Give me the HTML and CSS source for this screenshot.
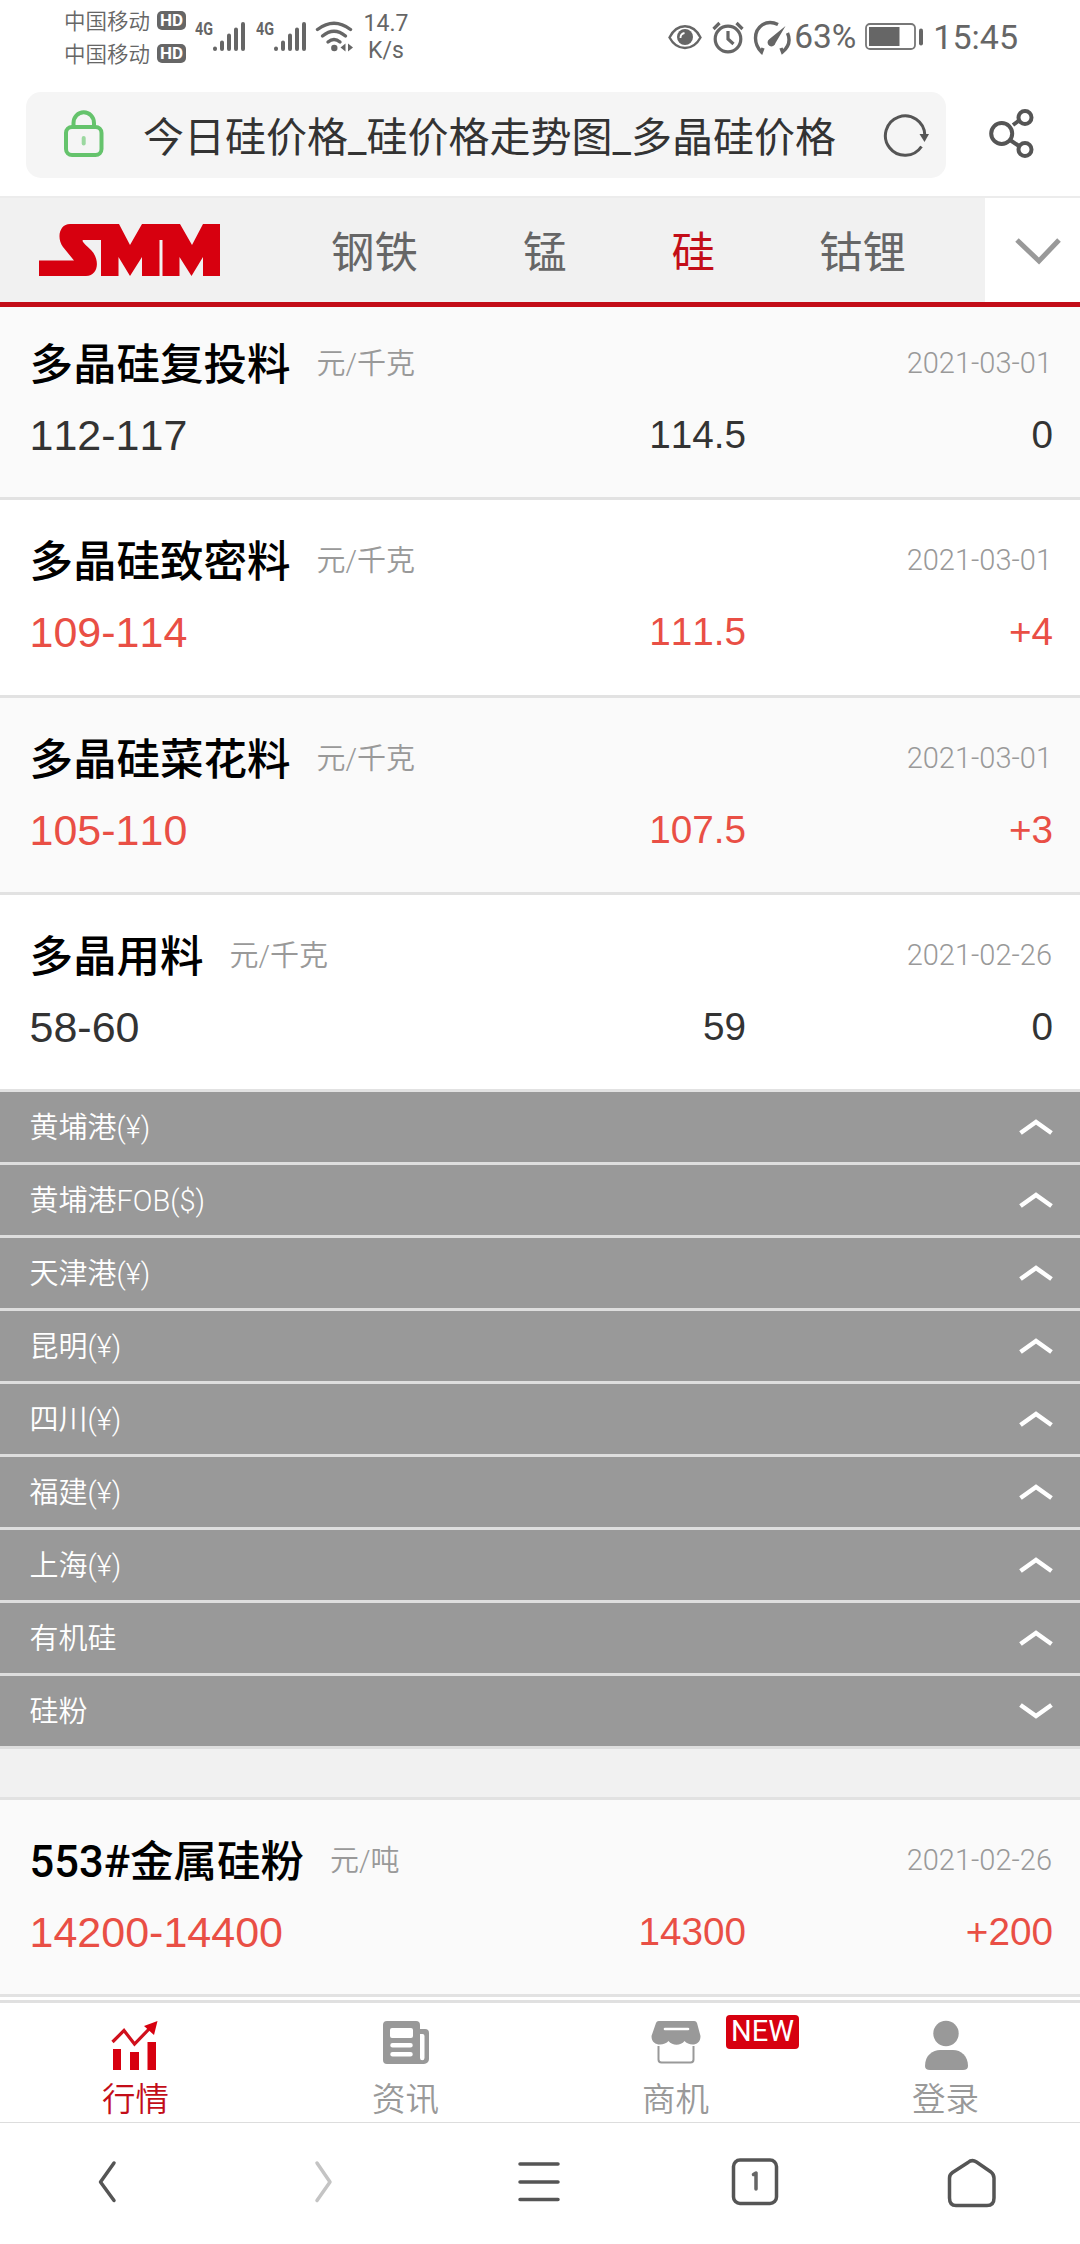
FILE: index.html
```
<!DOCTYPE html>
<html lang="zh-CN">
<head>
<meta charset="utf-8">
<title>今日硅价格_硅价格走势图_多晶硅价格</title>
<link rel="stylesheet" href="styles.css">
</head>
<body>
<header class="status">
  <div class="carriers">
    <div class="carrier"><span>中国移动</span><b class="hd">HD</b></div>
    <div class="carrier"><span>中国移动</span><b class="hd">HD</b></div>
  </div>
  <svg class="signal" width="52" height="36" viewBox="0 0 52 36"><text class="net" x="0" y="15.500" textLength="18" lengthAdjust="spacingAndGlyphs">4G</text><g stroke="#666" stroke-width="4" stroke-linecap="round"><path d="M20 29.500v.5M27 23.500v6.500M34 16.500v13.500M41 10.500v19.500M48 5v25"/></g></svg>
  <svg class="signal" width="52" height="36" viewBox="0 0 52 36"><text class="net" x="0" y="15.500" textLength="18" lengthAdjust="spacingAndGlyphs">4G</text><g stroke="#666" stroke-width="4" stroke-linecap="round"><path d="M20 29.500v.5M27 23.500v6.500M34 16.500v13.500M41 10.500v19.500M48 5v25"/></g></svg>
  <svg class="wifi" width="40" height="36" viewBox="0 0 40 36"><g fill="none" stroke="#666" stroke-width="3.400" stroke-linecap="round"><path d="M2.500 11.500Q19 -1 35.500 11.500"/><path d="M7.500 18Q19 8.500 30.500 18"/><path d="M13 24Q19 19 25 24"/></g><circle cx="19.300" cy="30" r="3.200" fill="#666"/><path d="M25.500 29.500l5-4v8zM38 29.500l-5-4v8z" fill="#666"/></svg>
  <div class="speed"><span>14.7</span><span>K/s</span></div>
  <div class="status-right">
    <svg width="34" height="36" viewBox="0 0 34 36"><path d="M1.500 18.500C9 3.500 25 3.500 32.500 18.500C25 32.500 9 32.500 1.500 18.500Z" fill="none" stroke="#666" stroke-width="2.400"/><circle cx="17" cy="18" r="8" fill="#666"/><path d="M12.500 19a5 5 0 0 1 4-5" stroke="#fff" stroke-width="1.800" fill="none"/></svg>
    <svg class="alarm" width="32" height="36" viewBox="0 0 32 36"><g fill="none" stroke="#666" stroke-width="3.200"><circle cx="16" cy="20" r="12.800"/><path d="M16 12v8l5.500 5M1.500 10l6-6M30.500 10l-6-6"/></g></svg>
    <svg class="gauge" width="38" height="36" viewBox="0 0 38 36"><g fill="none" stroke="#666" stroke-width="3.400"><path d="M25 5.500C13-.5 2.500 8 2.500 19C2.500 25 4.500 29 8.500 33L10 29"/><path d="M34.500 14C38 22 35.500 28 29.500 33L28 29"/></g><path d="M32.500 7L22.500 24a4 4 0 1 1-6-4Z" fill="#666"/></svg>
    <span class="pct">63%</span>
    <svg class="battery" width="60" height="30" viewBox="0 0 60 30"><rect x="1" y="2" width="49" height="25" rx="4" fill="none" stroke="#777" stroke-width="1.800"/><rect x="4" y="5" width="30.500" height="19" fill="#666"/><path d="M56 8.500v13" stroke="#666" stroke-width="4" stroke-linecap="round"/></svg>
    <span class="clock">15:45</span>
  </div>
</header>

<div class="urlbar">
  <div class="address">
    <svg class="lock" width="42" height="50" viewBox="0 0 42 50"><g fill="none" stroke="#65c36c" stroke-width="4"><rect x="3" y="18" width="35.500" height="28" rx="6"/><path d="M10.500 17v-3a10 10.500 0 0 1 20.500 0v3"/></g><path d="M20.700 29v5.500" stroke="#9bd8a0" stroke-width="4" stroke-linecap="round"/></svg>
    <span class="url">今日硅价格_硅价格走势图_多晶硅价格</span>
    <svg class="reload" width="46" height="46" viewBox="0 0 46 46"><path d="M38.500 34.500A19.700 19.700 0 1 1 41.800 23" fill="none" stroke="#555" stroke-width="3"/><path d="M36.500 22h9.500l-4.500 8z" fill="#555"/></svg>
  </div>
  <svg class="share" width="46" height="52" viewBox="0 0 46 52"><g fill="none" stroke="#555" stroke-width="4"><circle cx="12.700" cy="25.500" r="10.500"/><circle cx="36" cy="9.500" r="6.500"/><circle cx="36" cy="41.500" r="6.500"/><path d="M24 17l6-4.500M21 32l9 6"/></g></svg>
</div>

<nav class="topnav">
  <svg class="logo" width="182" height="52" viewBox="0 0 182 52"><path fill="#d7000f" fill-rule="evenodd" d="M31 0H80L91 21L103 0H141L153 21L164 0H181V52H164V33L152.500 52L140.500 33V52H123.500V16H120.500V52H103V33L91 52L79.500 33V52H62V16H44C42 17 47 21 52 26C61 35 60 52 47 52H0V36.500H35L24 23C17 13 21 0 31 0Z"/></svg>
  <span class="tab t1">钢铁</span><span class="tab t2">锰</span><span class="tab t3 active">硅</span><span class="tab t4">钴锂</span>
  <div class="more"><svg width="48" height="30" viewBox="0 0 48 30"><path d="M3 3L25 24L45 3" fill="none" stroke="#999" stroke-width="5"/></svg></div>
</nav>

<main class="content">
  <section class="item alt first"><div class="head"><h2>多晶硅复投料</h2><span class="unit">元/千克</span><time>2021-03-01</time></div><div class="nums"><span class="range">112-117</span><span class="avg">114.5</span><span class="diff">0</span></div></section>
  <section class="item up"><div class="head"><h2>多晶硅致密料</h2><span class="unit">元/千克</span><time>2021-03-01</time></div><div class="nums"><span class="range">109-114</span><span class="avg">111.5</span><span class="diff">+4</span></div></section>
  <section class="item alt up"><div class="head"><h2>多晶硅菜花料</h2><span class="unit">元/千克</span><time>2021-03-01</time></div><div class="nums"><span class="range">105-110</span><span class="avg">107.5</span><span class="diff">+3</span></div></section>
  <section class="item"><div class="head"><h2>多晶用料</h2><span class="unit">元/千克</span><time>2021-02-26</time></div><div class="nums"><span class="range">58-60</span><span class="avg">59</span><span class="diff">0</span></div></section>

  <div class="group"><span>黄埔港(¥)</span><svg class="chev" viewBox="0 0 34 18"><path d="M1.500 15L17 4L32.500 15"/></svg></div>
  <div class="group"><span>黄埔港FOB($)</span><svg class="chev" viewBox="0 0 34 18"><path d="M1.500 15L17 4L32.500 15"/></svg></div>
  <div class="group"><span>天津港(¥)</span><svg class="chev" viewBox="0 0 34 18"><path d="M1.500 15L17 4L32.500 15"/></svg></div>
  <div class="group"><span>昆明(¥)</span><svg class="chev" viewBox="0 0 34 18"><path d="M1.500 15L17 4L32.500 15"/></svg></div>
  <div class="group"><span>四川(¥)</span><svg class="chev" viewBox="0 0 34 18"><path d="M1.500 15L17 4L32.500 15"/></svg></div>
  <div class="group"><span>福建(¥)</span><svg class="chev" viewBox="0 0 34 18"><path d="M1.500 15L17 4L32.500 15"/></svg></div>
  <div class="group"><span>上海(¥)</span><svg class="chev" viewBox="0 0 34 18"><path d="M1.500 15L17 4L32.500 15"/></svg></div>
  <div class="group"><span>有机硅</span><svg class="chev" viewBox="0 0 34 18"><path d="M1.500 15L17 4L32.500 15"/></svg></div>
  <div class="group"><span>硅粉</span><svg class="chev" viewBox="0 0 34 18"><path d="M1.500 3L17 14L32.500 3"/></svg></div>
  <div class="spacer"></div>

  <section class="item alt up"><div class="head"><h2>553#金属硅粉</h2><span class="unit">元/吨</span><time>2021-02-26</time></div><div class="nums"><span class="range">14200-14400</span><span class="avg">14300</span><span class="diff">+200</span></div></section>
</main>

<nav class="appbar">
  <a class="app active"><svg width="48" height="52" viewBox="0 0 48 52"><path d="M2 29h8v21H2zM19 32h9v18h-9zM36.500 22H45v28h-8.500z" fill="#d7000f"/><path d="M1.500 22L13 10.500L23.500 24L41 6" fill="none" stroke="#d0101c" stroke-width="3.200"/><path d="M46.500 1L43 15L33 6z" fill="#d7000f"/></svg><span>行情</span></a>
  <a class="app"><svg class="nudge" width="48" height="52" viewBox="0 0 48 52"><path fill="#999" fill-rule="evenodd" d="M5 1H34a4 4 0 0 1 4 4V9h5a4 4 0 0 1 4 4V39a5 5 0 0 1-5 5H5a4 4 0 0 1-4-4V5a4 4 0 0 1 4-4ZM10 8a2 2 0 0 0-2 2v6a2 2 0 0 0 2 2H29a2 2 0 0 0 2-2v-6a2 2 0 0 0-2-2ZM10.500 23a2.200 2.200 0 0 0 0 4.500h18a2.200 2.200 0 0 0 0-4.500ZM10.500 32a2.200 2.200 0 0 0 0 4.500h18a2.200 2.200 0 0 0 0-4.500ZM38 14V38a2.200 2.200 0 0 0 4.500 0V16a2 2 0 0 0-2-2Z"/></svg><span>资讯</span></a>
  <a class="app"><svg class="nudge" width="50" height="52" viewBox="0 0 50 52"><path d="M8 1H43a3 3 0 0 1 3 2L49.500 16c0 11-12 10-16 5c-4 5-12 5-16 0c-4 5-17 6-17-5L5 3a3 3 0 0 1 3-2Z" fill="#999"/><path d="M14 9h23" stroke="#fff" stroke-width="2.600" stroke-linecap="round"/><path d="M7.500 26v13.500a3 3 0 0 0 3 3h29a3 3 0 0 0 3-3V26" fill="none" stroke="#999" stroke-width="2"/></svg><span>商机</span><b class="new">NEW</b></a>
  <a class="app"><svg class="nudge" width="48" height="52" viewBox="0 0 48 52"><circle cx="24" cy="13.500" r="12.700" fill="#999"/><path d="M3 46C3 35 11 30 18 30H31C39 30 46 36 46 46Q46 50 41 50H8Q3 50 3 46Z" fill="#999"/></svg><span>登录</span></a>
</nav>

<nav class="browserbar">
  <span><svg width="52" height="52" viewBox="0 0 52 52"><path d="M32 7L18.500 26L32 44.500" stroke="#555"/></svg></span>
  <span><svg width="52" height="52" viewBox="0 0 52 52"><path d="M19 7L32 26L19 44.500" stroke="#c4c4c4"/></svg></span>
  <span><svg width="52" height="52" viewBox="0 0 52 52"><path d="M6 8H44M6 26H44M6 43.500H44" stroke="#555"/></svg></span>
  <span><svg width="52" height="52" viewBox="0 0 52 52"><rect x="3.500" y="4" width="43" height="43.500" rx="6.500" stroke="#555"/><path d="M23.500 18.500L26 17V33" stroke="#666"/></svg></span>
  <span><svg width="52" height="52" viewBox="0 0 52 52"><path d="M22 6.500Q26 3 30.500 6L45 16Q48 18.500 48 22V42Q48 49.500 41 49.500H10Q3.500 49.500 3.500 42V22Q3.500 18.500 6.500 16.500Z" stroke="#555"/></svg></span>
</nav>
</body>
</html>
```
FILE: styles.css
```
* { box-sizing: border-box; }
html, body { margin: 0; }
body {
  width: 1080px;
  height: 2244px;
  overflow: hidden;
  display: flex;
  flex-direction: column;
  background: #fff;
  font-family: Roboto, "Noto Sans CJK SC", sans-serif;
  color: #333;
}
svg { display: block; flex: none; }

/* system status bar */
.status {
  height: 92px;
  display: flex;
  align-items: flex-start;
  padding: 4px 62px 0 64px;
  color: #666;
}
.carriers { width: 122px; margin-top: -1px; display: flex; flex-direction: column; }
.carrier {
  height: 33px;
  display: flex;
  align-items: center;
  justify-content: space-between;
  font: 350 21.500px "Noto Sans CJK SC", sans-serif;
}
.carrier span { padding-bottom: 1px; }
.hd {
  width: 29px;
  height: 19px;
  margin-top: 1px;
  border-radius: 5px;
  background: #666;
  color: #fff;
  font: 700 17px/19px Roboto, sans-serif;
  text-align: center;
}
.signal { margin: 15px 0 0 9px; }
.net { font: 700 18px Roboto, sans-serif; fill: #666; }
.wifi { margin: 14px 0 0 7px; }
.speed {
  width: 50px;
  margin: 6px 0 0 6px;
  display: flex;
  flex-direction: column;
  align-items: center;
  font-size: 23px;
  line-height: 27px;
}
.status-right {
  margin-left: auto;
  display: flex;
  align-items: center;
  height: 65px;
  font-size: 34px;
}
.alarm { margin-left: 10px; }
.gauge { margin-left: 9px; }
.pct { margin-left: 3px; font-size: 33.500px; }
.battery { margin-left: 9px; }
.clock { margin-left: 8px; }

/* address bar */
.urlbar {
  height: 104px;
  display: flex;
  align-items: flex-start;
  padding-left: 26px;
}
.address {
  width: 920px;
  height: 86px;
  display: flex;
  align-items: center;
  padding-left: 37px;
  border-radius: 15px;
  background: #f5f5f5;
}
.url {
  flex: none;
  width: 740px;
  margin-left: 38px;
  padding-top: 5px;
  font-size: 41px;
  line-height: 60px;
  white-space: nowrap;
}
.lock { margin-top: -3px; }
.share { margin: 16px 0 0 43px; }

/* category tabs */
.topnav {
  height: 111px;
  display: flex;
  align-items: center;
  padding-left: 39px;
  border-top: 2px solid #ececec;
  border-bottom: 5px solid #c30d18;
  background: #f1f1f1;
}
.tab { padding-top: 8px; font-size: 43.500px; line-height: 60px; color: #666; }
.tab.active { color: #c30d18; }
.t1 { margin-left: 110px; }
.t2 { margin-left: 105px; }
.t3 { margin-left: 105px; }
.t4 { margin-left: 104px; }
.more {
  width: 95px;
  height: 104px;
  margin-left: auto;
  padding: 39px 0 0 29px;
  background: #fff;
}

/* price list */
.content { height: 1693px; background: #fff; overflow: hidden; }
.item {
  height: 197.250px;
  padding: 30px 27px 0 29.500px;
  border-bottom: 3px solid #e2e2e2;
  background: #fff;
}
.item.alt { background: #fafafa; }
.item.first { height: 193.250px; padding-top: 26px; }
.head { height: 60px; display: flex; align-items: center; }
h2 {
  margin: 0;
  padding-top: 6px;
  font-size: 43.500px;
  font-weight: 500;
  line-height: 60px;
  color: #000;
}
.unit, time { font-size: 29px; font-weight: 300; color: #999; }
.unit {
  margin-left: 26px;
  padding-bottom: 4px;
  font-weight: 350;
}
time { margin: 0 1px 0 auto; }
.nums {
  display: grid;
  grid-template-columns: 400px 316.500px 1fr;
  align-items: start;
  margin-top: 12px;
  font-family: "Liberation Sans", Arial, sans-serif;
  font-kerning: none;
  line-height: 60px;
}
.range { font-size: 43px; }
.avg, .diff { font-size: 38.700px; text-align: right; }
.up .nums { color: #e94f45; }

.group {
  height: 73px;
  display: flex;
  align-items: center;
  justify-content: space-between;
  padding: 0 27px 0 29.500px;
  border-bottom: 3px solid #dedede;
  background: #999;
  color: #fff;
  font-size: 29px;
  font-weight: 350;
}
.group span { padding-bottom: 4px; }
.chev { width: 34px; height: 18px; fill: none; stroke: #fff; stroke-width: 4.500; }
.spacer { height: 51px; border-bottom: 3px solid #e2e2e2; background: #f1f1f1; }

/* site tab bar */
.appbar { height: 122px; display: flex; border-top: 3px solid #e0e0e0; }
.app {
  position: relative;
  width: 270px;
  display: flex;
  flex-direction: column;
  align-items: center;
  padding-top: 17px;
  font-size: 33.500px;
  line-height: 50px;
  color: #999;
}
.app span { margin: 3px 0 0 1px; font-weight: 350; }
.app.active { color: #c30d18; }
.nudge { margin-left: 2px; }
.new {
  position: absolute;
  left: 186px;
  top: 12px;
  width: 73px;
  height: 34px;
  border-radius: 4px;
  background: #d7000f;
  color: #fff;
  font: 400 29px/32px Roboto, sans-serif;
  text-align: center;
}

/* browser toolbar */
.browserbar {
  height: 122px;
  display: flex;
  border-top: 1px solid #ddd;
}
.browserbar span { width: 216px; display: flex; justify-content: center; padding-top: 33px; }
.browserbar svg { fill: none; stroke-width: 3.500; stroke-linecap: round; stroke-linejoin: round; }
```
